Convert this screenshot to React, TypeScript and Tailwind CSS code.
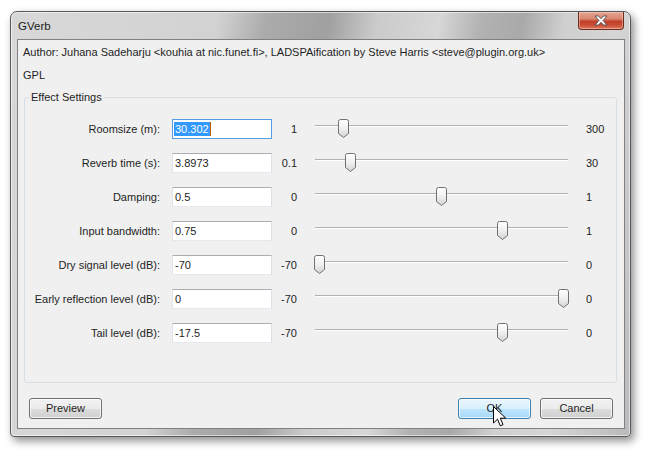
import React from "react";

type Row = { label: string; value: string; min: string; max: string; frac: number; focused?: boolean };

const rows: Row[] = [
  { label: "Roomsize (m):", value: "30.302", min: "1", max: "300", frac: (30.302 - 1) / 299, focused: true },
  { label: "Reverb time (s):", value: "3.8973", min: "0.1", max: "30", frac: (3.8973 - 0.1) / 29.9 },
  { label: "Damping:", value: "0.5", min: "0", max: "1", frac: 0.5 },
  { label: "Input bandwidth:", value: "0.75", min: "0", max: "1", frac: 0.75 },
  { label: "Dry signal level (dB):", value: "-70", min: "-70", max: "0", frac: 0 },
  { label: "Early reflection level (dB):", value: "0", min: "-70", max: "0", frac: 1 },
  { label: "Tail level (dB):", value: "-17.5", min: "-70", max: "0", frac: 52.5 / 70 },
];

function Thumb() {
  return (
    <svg width="11" height="19" viewBox="0 0 11 19">
      <defs>
        <linearGradient id="tg" x1="0" y1="0" x2="0" y2="1">
          <stop offset="0" stopColor="#ffffff" />
          <stop offset="0.5" stopColor="#f0f0f0" />
          <stop offset="1" stopColor="#d2d2d2" />
        </linearGradient>
      </defs>
      <path d="M0.5 2.5 Q0.5 0.5 2.5 0.5 H8.5 Q10.5 0.5 10.5 2.5 V14.5 L5.5 18.5 L0.5 14.5 Z" fill="url(#tg)" stroke="#707070" strokeWidth="1" />
    </svg>
  );
}

function Slider({ frac }: { frac: number }) {
  return (
    <div className="relative w-[255px] h-[20px] ml-[17px]">
      <div className="absolute left-[1px] right-[1px] top-[6px] h-[1px] bg-[#b0b0b0]" />
      <div className="absolute left-[1px] right-[1px] top-[7px] h-[1px] bg-[#ffffff]" />
      <div className="absolute top-0" style={{ left: `${Math.round(frac * 244)}px` }}>
        <Thumb />
      </div>
    </div>
  );
}

function Field({ value, focused }: { value: string; focused?: boolean }) {
  return (
    <div
      className={
        focused
          ? "ml-[12px] w-[100px] h-[20px] bg-white border border-[#569de5] flex items-center pl-[1px]"
          : "ml-[12px] w-[100px] h-[20px] bg-white border border-[#abadb3] border-l-[#e2e3ea] border-r-[#dbdfe6] border-b-[#e3e9ef] flex items-center pl-[1px]"
      }
    >
      {focused ? (
        <span className="flex items-center h-[14px]">
          <span className="bg-[#3399ff] text-white leading-[14px] px-[1px]">{value}</span>
          <span className="w-[1px] h-[14px] bg-[#c06000]" />
        </span>
      ) : (
        <span className="leading-[14px] px-[1px]">{value}</span>
      )}
    </div>
  );
}

function Button({ label, primary }: { label: string; primary?: boolean }) {
  return (
    <div
      className={
        primary
          ? "w-[73px] h-[21px] rounded-[3px] border border-[#3c7fb1] bg-[linear-gradient(180deg,#eaf6fd_0%,#d9f0fc_50%,#bee6fd_51%,#a7d9f5_100%)] shadow-[inset_0_0_0_1px_rgba(255,255,255,0.7)] flex items-center justify-center text-[#1e1e1e]"
          : "w-[73px] h-[21px] rounded-[3px] border border-[#707070] bg-[linear-gradient(180deg,#f2f2f2_0%,#ebebeb_50%,#dddddd_51%,#cfcfcf_100%)] shadow-[inset_0_0_0_1px_rgba(255,255,255,0.75)] flex items-center justify-center text-[#1e1e1e]"
      }
    >
      {label}
    </div>
  );
}

export default function App() {
  return (
    <div
      className="relative w-[650px] h-[456px] bg-white overflow-hidden text-[11px] text-[#1e1e1e]"
      style={{ fontFamily: '"Liberation Sans", Arial, sans-serif' }}
    >
      <div className="pt-[11px] pl-[10px]">
        <div className="relative w-[621px] h-[426px] flex flex-col rounded-t-[7px] rounded-b-[4px] border border-[#555a60] shadow-[3px_4px_9px_rgba(0,0,0,0.45),inset_0_0_0_1px_rgba(255,255,255,0.55)] bg-[linear-gradient(100deg,#d8d8d8_0%,#d2d2d2_30%,#ababab_37%,#a0a0a0_46%,#cbcbcb_53%,#d7d7d7_62%,#b2b2b2_68%,#a9a9a9_74%,#cfcfcf_80%,#d5d5d5_88%,#bababa_100%)]">
          {/* title bar */}
          <div className="relative h-[27px] flex items-center pl-[7px] shrink-0">
            <span className="text-[11.5px] text-[#1a1a1a] leading-[14px] mt-[1px]">GVerb</span>
            <div className="absolute top-0 left-[567px] w-[46px] h-[18px] rounded-b-[4px] border border-t-0 border-[#6e2a1e] bg-[linear-gradient(180deg,#e6a592_0%,#d98770_40%,#c0412a_55%,#c84a32_75%,#dc7a5e_100%)] shadow-[inset_0_0_0_1px_rgba(255,220,200,0.45)] flex items-center justify-center">
              <svg width="14" height="11" viewBox="0 0 14 11">
                <path d="M1 1 H4.5 L7 3.7 L9.5 1 H13 L9 5.5 L13 10 H9.5 L7 7.3 L4.5 10 H1 L5 5.5 Z" fill="#ffffff" stroke="#4a4a4a" strokeWidth="0.9" strokeLinejoin="round" />
              </svg>
            </div>
          </div>
          {/* client */}
          <div className="ml-[6px] mr-[5px] mb-[7px] flex-1 border border-[#7d8186] bg-[#f0f0f0] flex flex-col">
            <div className="pt-[5px] pl-[5px] leading-[14px]">
              Author: Juhana Sadeharju &lt;kouhia at nic.funet.fi&gt;, LADSPAification by Steve Harris &lt;steve@plugin.org.uk&gt;
            </div>
            <div className="mt-[9px] pl-[5px] leading-[14px]">GPL</div>
            <fieldset className="mt-[8px] ml-[6px] mr-[7px] border border-[#d5dfe5] rounded-[3px] pb-[39px]">
              <legend className="ml-[4px] px-[2px] leading-[14px]">Effect Settings</legend>
              <div className="pt-[15px] flex flex-col gap-[14px]">
                {rows.map((r) => (
                  <div key={r.label} className="flex items-center h-[20px]">
                    <div className="w-[135px] text-right whitespace-nowrap leading-[14px]">{r.label}</div>
                    <Field value={r.value} focused={r.focused} />
                    <div className="w-[25px] text-right leading-[14px]">{r.min}</div>
                    <Slider frac={r.frac} />
                    <div className="ml-[17px] leading-[14px]">{r.max}</div>
                  </div>
                ))}
              </div>
            </fieldset>
            <div className="mt-[15px] flex items-center pl-[11px] pr-[11px]">
              <Button label="Preview" />
              <div className="flex-1" />
              <Button label="OK" primary />
              <div className="w-[9px]" />
              <Button label="Cancel" />
            </div>
          </div>
        </div>
      </div>
      {/* mouse cursor */}
      <svg className="absolute left-[493px] top-[406px]" width="14" height="23" viewBox="0 0 14 23">
        <path d="M0.5 0.5 L0.5 17 L4.5 13.2 L7.3 19.8 L10 18.7 L7.3 12.2 L12.8 12.2 Z" fill="#ffffff" stroke="#000000" strokeWidth="1" strokeLinejoin="miter" />
      </svg>
    </div>
  );
}
